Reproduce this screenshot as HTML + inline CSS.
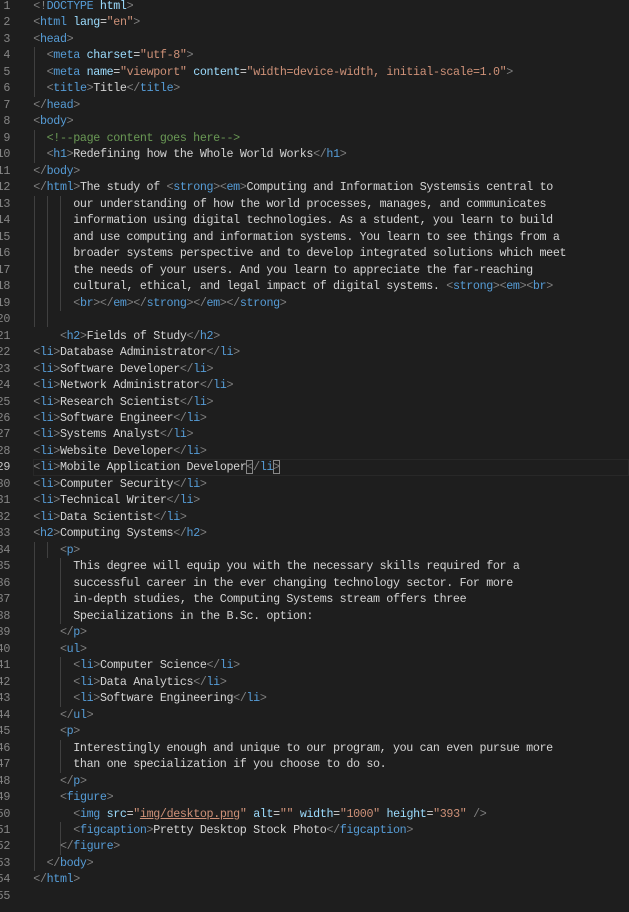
<!DOCTYPE html>
<html><head><meta charset="utf-8"><style>
body{margin:0;background:#1e1e1e;width:629px;height:912px;overflow:hidden;position:relative;font-family:"Liberation Mono",monospace;font-size:11.7px;letter-spacing:-0.353px;color:#d4d4d4}
.l{position:absolute;left:33.3px;height:16.48px;line-height:16.48px;white-space:pre}
.n{position:absolute;right:619px;height:16.48px;line-height:16.48px;color:#858585;text-align:right;white-space:pre}
.b{color:#808080}.t{color:#569cd6}.a{color:#9cdcfe}.s{color:#ce9178}.c{color:#6a9955}
.g{position:absolute;width:1px;background:#404040}
.u{text-decoration:underline}
.cur{position:absolute;left:33px;right:0;border:1px solid #282828;box-sizing:border-box}
.bx{outline:1px solid #888;outline-offset:-1px}
</style></head><body>
<div class="cur" style="top:459.4px;height:16.48px"></div>
<div class="g" style="left:33.5px;top:47.4px;height:49.5px"></div>
<div class="g" style="left:33.5px;top:129.8px;height:33px"></div>
<div class="g" style="left:33.5px;top:195.7px;height:131.8px"></div>
<div class="g" style="left:46.8px;top:195.7px;height:131.8px"></div>
<div class="g" style="left:60.1px;top:195.7px;height:115.4px"></div>
<div class="g" style="left:33.5px;top:541.8px;height:329.6px"></div>
<div class="g" style="left:46.8px;top:541.8px;height:16.5px"></div>
<div class="g" style="left:60.1px;top:558.3px;height:65.9px"></div>
<div class="g" style="left:60.1px;top:657.2px;height:49.4px"></div>
<div class="g" style="left:60.1px;top:739.6px;height:33px"></div>
<div class="g" style="left:60.1px;top:822px;height:33px"></div>
<div class="n" style="top:-2px">1</div><div class="l" style="top:-2px"><span class="b">&lt;!</span><span class="t">DOCTYPE</span> <span class="a">html</span><span class="b">&gt;</span></div>
<div class="n" style="top:14.48px">2</div><div class="l" style="top:14.48px"><span class="b">&lt;</span><span class="t">html</span> <span class="a">lang</span>=<span class="s">"en"</span><span class="b">&gt;</span></div>
<div class="n" style="top:30.96px">3</div><div class="l" style="top:30.96px"><span class="b">&lt;</span><span class="t">head</span><span class="b">&gt;</span></div>
<div class="n" style="top:47.44px">4</div><div class="l" style="top:47.44px">  <span class="b">&lt;</span><span class="t">meta</span> <span class="a">charset</span>=<span class="s">"utf-8"</span><span class="b">&gt;</span></div>
<div class="n" style="top:63.92px">5</div><div class="l" style="top:63.92px">  <span class="b">&lt;</span><span class="t">meta</span> <span class="a">name</span>=<span class="s">"viewport"</span> <span class="a">content</span>=<span class="s">"width=device-width, initial-scale=1.0"</span><span class="b">&gt;</span></div>
<div class="n" style="top:80.4px">6</div><div class="l" style="top:80.4px">  <span class="b">&lt;</span><span class="t">title</span><span class="b">&gt;</span>Title<span class="b">&lt;/</span><span class="t">title</span><span class="b">&gt;</span></div>
<div class="n" style="top:96.88px">7</div><div class="l" style="top:96.88px"><span class="b">&lt;/</span><span class="t">head</span><span class="b">&gt;</span></div>
<div class="n" style="top:113.36px">8</div><div class="l" style="top:113.36px"><span class="b">&lt;</span><span class="t">body</span><span class="b">&gt;</span></div>
<div class="n" style="top:129.84px">9</div><div class="l" style="top:129.84px">  <span class="c">&lt;!--page content goes here--&gt;</span></div>
<div class="n" style="top:146.32px">10</div><div class="l" style="top:146.32px">  <span class="b">&lt;</span><span class="t">h1</span><span class="b">&gt;</span>Redefining how the Whole World Works<span class="b">&lt;/</span><span class="t">h1</span><span class="b">&gt;</span></div>
<div class="n" style="top:162.8px">11</div><div class="l" style="top:162.8px"><span class="b">&lt;/</span><span class="t">body</span><span class="b">&gt;</span></div>
<div class="n" style="top:179.28px">12</div><div class="l" style="top:179.28px"><span class="b">&lt;/</span><span class="t">html</span><span class="b">&gt;</span>The study of <span class="b">&lt;</span><span class="t">strong</span><span class="b">&gt;&lt;</span><span class="t">em</span><span class="b">&gt;</span>Computing and Information Systemsis central to</div>
<div class="n" style="top:195.76px">13</div><div class="l" style="top:195.76px">      our understanding of how the world processes, manages, and communicates</div>
<div class="n" style="top:212.24px">14</div><div class="l" style="top:212.24px">      information using digital technologies. As a student, you learn to build</div>
<div class="n" style="top:228.72px">15</div><div class="l" style="top:228.72px">      and use computing and information systems. You learn to see things from a</div>
<div class="n" style="top:245.2px">16</div><div class="l" style="top:245.2px">      broader systems perspective and to develop integrated solutions which meet</div>
<div class="n" style="top:261.68px">17</div><div class="l" style="top:261.68px">      the needs of your users. And you learn to appreciate the far-reaching</div>
<div class="n" style="top:278.16px">18</div><div class="l" style="top:278.16px">      cultural, ethical, and legal impact of digital systems. <span class="b">&lt;</span><span class="t">strong</span><span class="b">&gt;&lt;</span><span class="t">em</span><span class="b">&gt;&lt;</span><span class="t">br</span><span class="b">&gt;</span></div>
<div class="n" style="top:294.64px">19</div><div class="l" style="top:294.64px">      <span class="b">&lt;</span><span class="t">br</span><span class="b">&gt;&lt;/</span><span class="t">em</span><span class="b">&gt;&lt;/</span><span class="t">strong</span><span class="b">&gt;&lt;/</span><span class="t">em</span><span class="b">&gt;&lt;/</span><span class="t">strong</span><span class="b">&gt;</span></div>
<div class="n" style="top:311.12px">20</div>
<div class="n" style="top:327.6px">21</div><div class="l" style="top:327.6px">    <span class="b">&lt;</span><span class="t">h2</span><span class="b">&gt;</span>Fields of Study<span class="b">&lt;/</span><span class="t">h2</span><span class="b">&gt;</span></div>
<div class="n" style="top:344.08px">22</div><div class="l" style="top:344.08px"><span class="b">&lt;</span><span class="t">li</span><span class="b">&gt;</span>Database Administrator<span class="b">&lt;/</span><span class="t">li</span><span class="b">&gt;</span></div>
<div class="n" style="top:360.56px">23</div><div class="l" style="top:360.56px"><span class="b">&lt;</span><span class="t">li</span><span class="b">&gt;</span>Software Developer<span class="b">&lt;/</span><span class="t">li</span><span class="b">&gt;</span></div>
<div class="n" style="top:377.04px">24</div><div class="l" style="top:377.04px"><span class="b">&lt;</span><span class="t">li</span><span class="b">&gt;</span>Network Administrator<span class="b">&lt;/</span><span class="t">li</span><span class="b">&gt;</span></div>
<div class="n" style="top:393.52px">25</div><div class="l" style="top:393.52px"><span class="b">&lt;</span><span class="t">li</span><span class="b">&gt;</span>Research Scientist<span class="b">&lt;/</span><span class="t">li</span><span class="b">&gt;</span></div>
<div class="n" style="top:410px">26</div><div class="l" style="top:410px"><span class="b">&lt;</span><span class="t">li</span><span class="b">&gt;</span>Software Engineer<span class="b">&lt;/</span><span class="t">li</span><span class="b">&gt;</span></div>
<div class="n" style="top:426.48px">27</div><div class="l" style="top:426.48px"><span class="b">&lt;</span><span class="t">li</span><span class="b">&gt;</span>Systems Analyst<span class="b">&lt;/</span><span class="t">li</span><span class="b">&gt;</span></div>
<div class="n" style="top:442.96px">28</div><div class="l" style="top:442.96px"><span class="b">&lt;</span><span class="t">li</span><span class="b">&gt;</span>Website Developer<span class="b">&lt;/</span><span class="t">li</span><span class="b">&gt;</span></div>
<div class="n" style="top:459.44px;color:#c6c6c6">29</div><div class="l" style="top:459.44px"><span class="b">&lt;</span><span class="t">li</span><span class="b">&gt;</span>Mobile Application Developer<span class="b bx">&lt;</span><span class="b">/</span><span class="t">li</span><span class="b bx">&gt;</span></div>
<div class="n" style="top:475.92px">30</div><div class="l" style="top:475.92px"><span class="b">&lt;</span><span class="t">li</span><span class="b">&gt;</span>Computer Security<span class="b">&lt;/</span><span class="t">li</span><span class="b">&gt;</span></div>
<div class="n" style="top:492.4px">31</div><div class="l" style="top:492.4px"><span class="b">&lt;</span><span class="t">li</span><span class="b">&gt;</span>Technical Writer<span class="b">&lt;/</span><span class="t">li</span><span class="b">&gt;</span></div>
<div class="n" style="top:508.88px">32</div><div class="l" style="top:508.88px"><span class="b">&lt;</span><span class="t">li</span><span class="b">&gt;</span>Data Scientist<span class="b">&lt;/</span><span class="t">li</span><span class="b">&gt;</span></div>
<div class="n" style="top:525.36px">33</div><div class="l" style="top:525.36px"><span class="b">&lt;</span><span class="t">h2</span><span class="b">&gt;</span>Computing Systems<span class="b">&lt;/</span><span class="t">h2</span><span class="b">&gt;</span></div>
<div class="n" style="top:541.84px">34</div><div class="l" style="top:541.84px">    <span class="b">&lt;</span><span class="t">p</span><span class="b">&gt;</span></div>
<div class="n" style="top:558.32px">35</div><div class="l" style="top:558.32px">      This degree will equip you with the necessary skills required for a</div>
<div class="n" style="top:574.8px">36</div><div class="l" style="top:574.8px">      successful career in the ever changing technology sector. For more</div>
<div class="n" style="top:591.28px">37</div><div class="l" style="top:591.28px">      in-depth studies, the Computing Systems stream offers three</div>
<div class="n" style="top:607.76px">38</div><div class="l" style="top:607.76px">      Specializations in the B.Sc. option:</div>
<div class="n" style="top:624.24px">39</div><div class="l" style="top:624.24px">    <span class="b">&lt;/</span><span class="t">p</span><span class="b">&gt;</span></div>
<div class="n" style="top:640.72px">40</div><div class="l" style="top:640.72px">    <span class="b">&lt;</span><span class="t">ul</span><span class="b">&gt;</span></div>
<div class="n" style="top:657.2px">41</div><div class="l" style="top:657.2px">      <span class="b">&lt;</span><span class="t">li</span><span class="b">&gt;</span>Computer Science<span class="b">&lt;/</span><span class="t">li</span><span class="b">&gt;</span></div>
<div class="n" style="top:673.68px">42</div><div class="l" style="top:673.68px">      <span class="b">&lt;</span><span class="t">li</span><span class="b">&gt;</span>Data Analytics<span class="b">&lt;/</span><span class="t">li</span><span class="b">&gt;</span></div>
<div class="n" style="top:690.16px">43</div><div class="l" style="top:690.16px">      <span class="b">&lt;</span><span class="t">li</span><span class="b">&gt;</span>Software Engineering<span class="b">&lt;/</span><span class="t">li</span><span class="b">&gt;</span></div>
<div class="n" style="top:706.64px">44</div><div class="l" style="top:706.64px">    <span class="b">&lt;/</span><span class="t">ul</span><span class="b">&gt;</span></div>
<div class="n" style="top:723.12px">45</div><div class="l" style="top:723.12px">    <span class="b">&lt;</span><span class="t">p</span><span class="b">&gt;</span></div>
<div class="n" style="top:739.6px">46</div><div class="l" style="top:739.6px">      Interestingly enough and unique to our program, you can even pursue more</div>
<div class="n" style="top:756.08px">47</div><div class="l" style="top:756.08px">      than one specialization if you choose to do so.</div>
<div class="n" style="top:772.56px">48</div><div class="l" style="top:772.56px">    <span class="b">&lt;/</span><span class="t">p</span><span class="b">&gt;</span></div>
<div class="n" style="top:789.04px">49</div><div class="l" style="top:789.04px">    <span class="b">&lt;</span><span class="t">figure</span><span class="b">&gt;</span></div>
<div class="n" style="top:805.52px">50</div><div class="l" style="top:805.52px">      <span class="b">&lt;</span><span class="t">img</span> <span class="a">src</span>=<span class="s">"<span class="u">img/desktop.png</span>"</span> <span class="a">alt</span>=<span class="s">""</span> <span class="a">width</span>=<span class="s">"1000"</span> <span class="a">height</span>=<span class="s">"393"</span> <span class="b">/&gt;</span></div>
<div class="n" style="top:822px">51</div><div class="l" style="top:822px">      <span class="b">&lt;</span><span class="t">figcaption</span><span class="b">&gt;</span>Pretty Desktop Stock Photo<span class="b">&lt;/</span><span class="t">figcaption</span><span class="b">&gt;</span></div>
<div class="n" style="top:838.48px">52</div><div class="l" style="top:838.48px">    <span class="b">&lt;/</span><span class="t">figure</span><span class="b">&gt;</span></div>
<div class="n" style="top:854.96px">53</div><div class="l" style="top:854.96px">  <span class="b">&lt;/</span><span class="t">body</span><span class="b">&gt;</span></div>
<div class="n" style="top:871.44px">54</div><div class="l" style="top:871.44px"><span class="b">&lt;/</span><span class="t">html</span><span class="b">&gt;</span></div>
<div class="n" style="top:887.92px">55</div>
</body></html>
